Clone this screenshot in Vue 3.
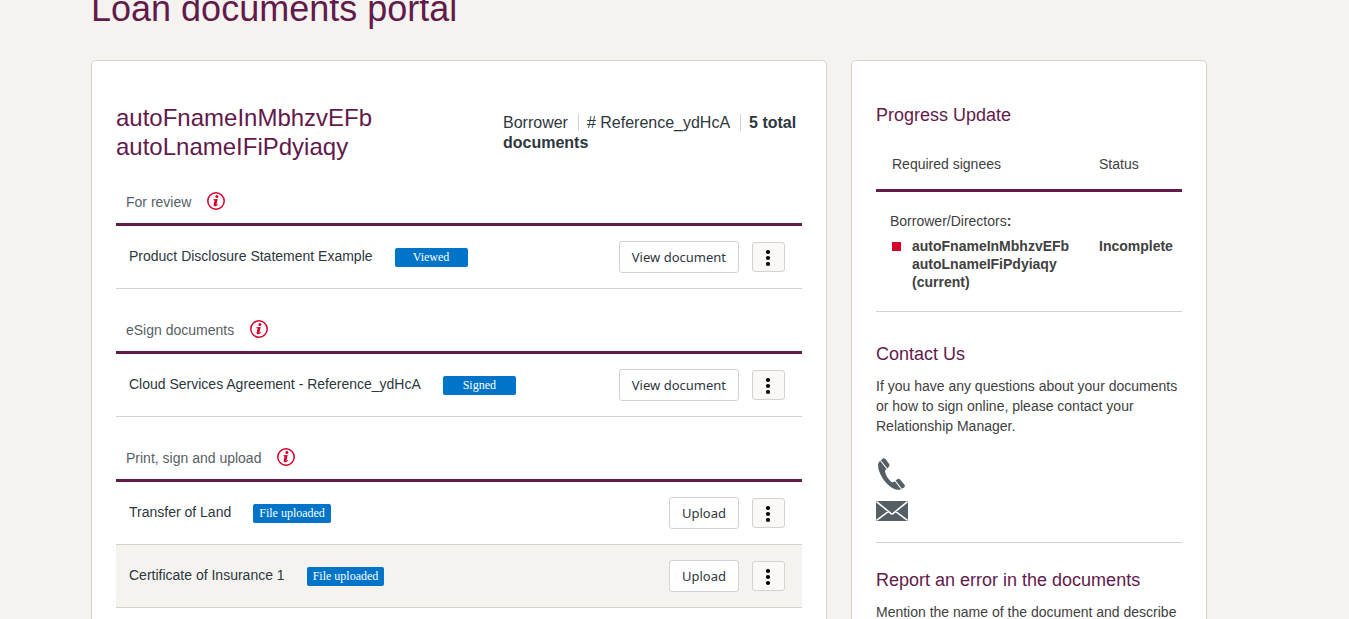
<script setup>
const sections = [
  {
    title: 'For review',
    docs: [{ name: 'Product Disclosure Statement Example', status: 'Viewed', action: 'View document' }],
  },
  {
    title: 'eSign documents',
    docs: [{ name: 'Cloud Services Agreement - Reference_ydHcA', status: 'Signed', action: 'View document' }],
  },
  {
    title: 'Print, sign and upload',
    docs: [
      { name: 'Transfer of Land', status: 'File uploaded', action: 'Upload' },
      { name: 'Certificate of Insurance 1', status: 'File uploaded', action: 'Upload' },
    ],
  },
]
</script>

<template>
  <div class="page">
    <h1 class="page-title">Loan documents portal</h1>
    <div class="columns">
      <main class="card">
        <header class="loan">
          <h2 class="loan-name">autoFnameInMbhzvEFb autoLnameIFiPdyiaqy</h2>
          <p class="loan-meta">
            <span class="meta-item">Borrower</span><span class="meta-item"># Reference_ydHcA</span><strong>5 total documents</strong>
          </p>
        </header>

        <section v-for="section in sections" :key="section.title">
          <div class="section-head">
            <h3>{{ section.title }}</h3>
            <button class="info" type="button" :aria-label="'About ' + section.title">
              <svg viewBox="0 0 18 18" width="18" height="18">
                <circle cx="9" cy="9" r="8.2" fill="none" stroke="#d5002b" stroke-width="1.5" />
                <circle cx="9.9" cy="4.6" r="1.5" fill="#d5002b" />
                <path d="M6.4 7.3 L10.7 6.9 L9.5 12.2 C9.4 12.9 9.9 12.7 10.8 11.9 L11.2 12.5 C9.9 13.9 8.8 14.4 7.7 14.2 C6.6 14 6.5 13.2 6.7 12.3 L7.6 8.4 L6.3 8.1 Z" fill="#d5002b" />
              </svg>
            </button>
          </div>
          <div v-for="doc in section.docs" :key="doc.name" class="doc">
            <span class="doc-name">{{ doc.name }}</span>
            <span class="badge">{{ doc.status }}</span>
            <div class="actions">
              <button class="action" type="button">{{ doc.action }}</button>
              <button class="more" type="button" :aria-label="'More options for ' + doc.name">
                <svg viewBox="0 0 6 18" width="6" height="18">
                  <circle cx="3" cy="3" r="2.1" />
                  <circle cx="3" cy="9" r="2.1" />
                  <circle cx="3" cy="15" r="2.1" />
                </svg>
              </button>
            </div>
          </div>
        </section>
      </main>

      <aside class="card side">
        <section class="block">
          <h2>Progress Update</h2>
          <table class="signees">
            <thead>
              <tr><th scope="col">Required signees</th><th class="status" scope="col">Status</th></tr>
            </thead>
            <tbody>
              <tr><td class="group" colspan="2">Borrower/Directors<b>:</b></td></tr>
              <tr class="signee">
                <td><span class="who"><i class="marker"></i><span>autoFnameInMbhzvEFb autoLnameIFiPdyiaqy (current)</span></span></td>
                <td>Incomplete</td>
              </tr>
            </tbody>
          </table>
        </section>
        <section class="block">
          <h2>Contact Us</h2>
          <p>If you have any questions about your documents or how to sign online, please contact your Relationship Manager.</p>
          <div class="contacts">
            <svg viewBox="0 0 32 32" width="32" height="32" role="img" aria-label="Phone">
              <path d="M4.1 2.8 C1.8 4.6 1.5 8.5 3 12.8 C5.5 20 10.8 27.3 17.2 30.4 C20 31.8 23 32.3 25 31.3 L18.8 23.2 C17.5 24.3 16.7 24.7 15.5 23.9 C12.6 21.7 10.2 17.8 9.1 13.9 C8.8 12.7 9.3 12 10.6 11.2 Z" fill="#555f65" />
              <path d="M4.9 2.2 L6.2 1 C7.6 -.1 8.6 .1 9.6 1.3 L13 5.8 C13.9 7 13.7 7.7 12.8 8.8 L11.4 10.6 Z" fill="#555f65" />
              <path d="M19.6 22.5 L21 21.4 C22.4 20.4 23.3 20.6 24.3 21.8 L28.3 26.6 C29.2 27.8 29.1 28.7 28 29.6 L25.9 30.7 Z" fill="#555f65" />
            </svg>
            <svg viewBox="0 0 32 20" width="32" height="20" role="img" aria-label="Email">
              <path d="M0 0 H32 V20 H0 Z" fill="#555f65" />
              <path d="M.5 .7 L14.1 11.7 Q16 14.4 17.9 11.7 L31.5 .7 M.5 19.3 L12.5 10.4 M31.5 19.3 L19.5 10.4" fill="none" stroke="#fff" stroke-width="1.6" />
            </svg>
          </div>
        </section>
        <section class="block">
          <h2>Report an error in the documents</h2>
          <p>Mention the name of the document and describe</p>
        </section>
      </aside>
    </div>
  </div>
</template>

<style>
body {
  background: #f4f3ef;
}
</style>

<style scoped>
.page {
  box-sizing: border-box;
  height: 100vh;
  overflow: hidden;
  padding: 0 142px 0 91px;
  background: #f4f3ef;
  color: #2d373e;
  font-family: "Liberation Sans", Arial, sans-serif;
  font-size: 14px;
  line-height: 20px;
}
h1, h2, h3, p {
  margin: 0;
  font-weight: 400;
}
.page-title {
  margin: -11px 0 31px;
  color: #621a4b;
  font-size: 36px;
  line-height: 40px;
}
.columns {
  display: grid;
  grid-template-columns: minmax(0, 736fr) minmax(0, 356fr);
  gap: 24px;
}
.card {
  border: 1px solid #d7d2cb;
  border-radius: 5px;
  background: #fff;
  padding: 42px 24px 32px;
}
.loan {
  display: grid;
  grid-template-columns: minmax(0, 387fr) minmax(0, 299fr);
}
.loan-name {
  max-width: 320px;
  color: #621a4b;
  font-size: 24px;
  line-height: 29px;
}
.loan-meta {
  padding-top: 10px;
  font-size: 16px;
}
.meta-item {
  margin-right: 8px;
  padding-right: 10px;
  border-right: 1px solid #d7d2cb;
}
.section-head {
  display: flex;
  align-items: center;
  gap: 16px;
  padding: 30px 10px 12px;
  border-bottom: 3px solid #621a4b;
}
.section-head h3 {
  padding-top: 2px;
  color: #575f65;
  font-size: 14px;
  line-height: 18px;
}
.info {
  width: 18px;
  height: 18px;
  padding: 0;
  border: 0;
  background: none;
}
.info svg, .more svg {
  display: block;
}
.doc {
  display: flex;
  align-items: center;
  height: 62px;
  padding: 0 17px 0 13px;
  border-bottom: 1px solid #d7d2cb;
}
.doc:nth-child(odd) {
  background: #f4f3ef;
}
.doc-name {
  padding-bottom: 2px;
}
.badge {
  box-sizing: border-box;
  min-width: 73px;
  margin-left: 22px;
  padding: 0 6px;
  border-radius: 2px;
  background: #0074c8;
  color: #fff;
  font-family: "Liberation Serif", serif;
  font-size: 12px;
  line-height: 19px;
  text-align: center;
}
.actions {
  display: flex;
  align-items: center;
  gap: 13px;
  margin-left: auto;
}
.action, .more {
  border: 1px solid #d7d2cb;
  border-radius: 3px;
}
.action {
  height: 32px;
  padding: 0 12px;
  background: #fff;
  color: #2d373e;
  font: 13px "Noto Sans", "Open Sans", sans-serif;
}
.more {
  display: grid;
  place-items: center;
  width: 33px;
  height: 30px;
  padding: 2px 2px 0 0;
  background: #faf9f8;
}
.side {
  padding-top: 0;
  color: #414141;
}
.block {
  padding: 32px 0 20px;
  border-bottom: 1px solid #d7d2cb;
}
.block:first-child {
  padding-top: 44px;
}
.block:last-child {
  padding-top: 27px;
  border: 0;
}
.block h2 {
  margin-bottom: 12px;
  color: #621a4b;
  font-size: 18px;
  line-height: 20px;
}
.signees {
  width: 100%;
  border-collapse: collapse;
  line-height: 18px;
}
.signees th {
  padding: 18px 16px 16px;
  border-bottom: 3px solid #621a4b;
  font-weight: 400;
  text-align: left;
}
.signees .status {
  width: 67px;
}
.signees td {
  padding: 0 0 0 16px;
  vertical-align: top;
}
.signees .group {
  padding: 20px 14px 7px;
}
.signee {
  font-weight: 700;
}
.who {
  display: flex;
  gap: 11px;
}
.marker {
  flex: none;
  width: 9px;
  height: 9px;
  margin-top: 5px;
  background: #d5002b;
}
.contacts {
  display: flex;
  flex-direction: column;
  gap: 11px;
  padding: 22px 0 1px;
}
</style>
